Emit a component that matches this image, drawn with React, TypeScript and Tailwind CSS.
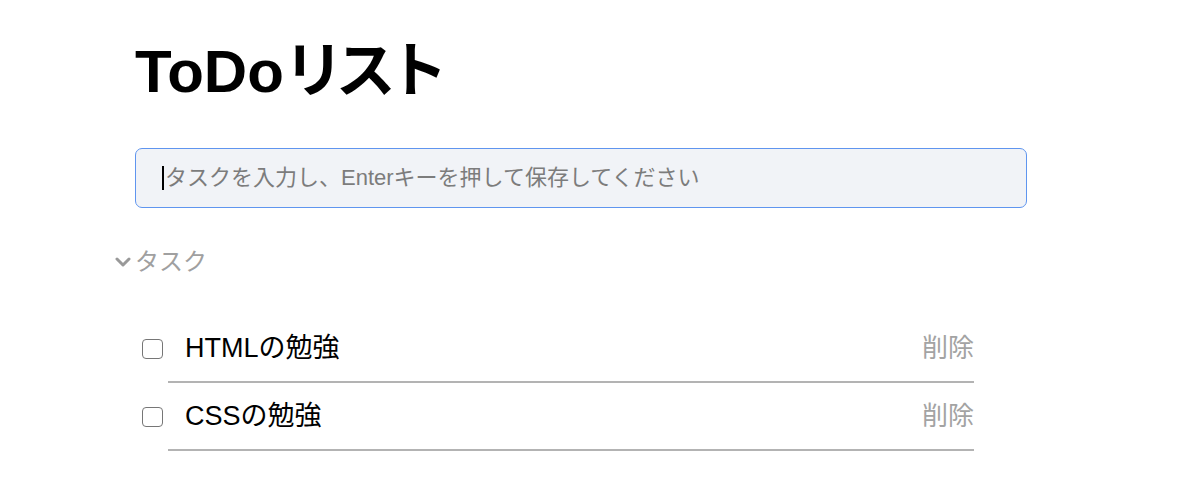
import React from "react";

const font = { fontFamily: '"Liberation Sans", "Noto Sans CJK JP", sans-serif' };

function Row({ label }: { label: string }) {
  return (
    <div className="flex items-stretch">
      <div className="flex w-[33px] items-center pl-[7px]">
        <div className="h-[20px] w-[21px] rounded-[4px] border-[1.5px] border-[#767676] bg-white" />
      </div>
      <div className="flex h-[68px] w-[806px] items-center justify-between border-b-2 border-[#b3b3b3] pl-[17px]">
        <span className="text-[27px] leading-none text-black">{label}</span>
        <span className="text-[26px] leading-none text-[#a3a3a3]">削除</span>
      </div>
    </div>
  );
}

export default function App() {
  return (
    <div className="min-h-[491px] bg-white" style={font}>
      <div className="pl-[135px] pt-[42px]">
        <h1 className="h-[60px] text-[60px] font-bold leading-none text-black">
          ToDo<span className="tracking-[-8px]">リスト</span>
        </h1>
        <div className="mt-[46px] flex h-[60px] w-[892px] items-center rounded-[7px] border-[1.5px] border-[#5f95ef] bg-[#f1f3f7] pl-[26px]">
          <span className="mr-[1px] h-[24px] w-[2px] bg-black" />
          <span className="text-[22px] leading-none text-[#7c7c7c]">タスクを入力し、Enterキーを押して保存してください</span>
        </div>
        <div className="-ml-[20px] mt-[38px] flex h-[32px] items-center">
          <svg width="16" height="10" viewBox="0 0 16 10" className="mr-[4px]">
            <path d="M2 2 L8 8 L14 2" fill="none" stroke="#999" strokeWidth="3" strokeLinecap="round" strokeLinejoin="round" />
          </svg>
          <span className="text-[24px] leading-none text-[#a0a0a0]">タスク</span>
        </div>
        <div className="mt-[37px] flex flex-col">
          <Row label="HTMLの勉強" />
          <Row label="CSSの勉強" />
        </div>
      </div>
    </div>
  );
}
